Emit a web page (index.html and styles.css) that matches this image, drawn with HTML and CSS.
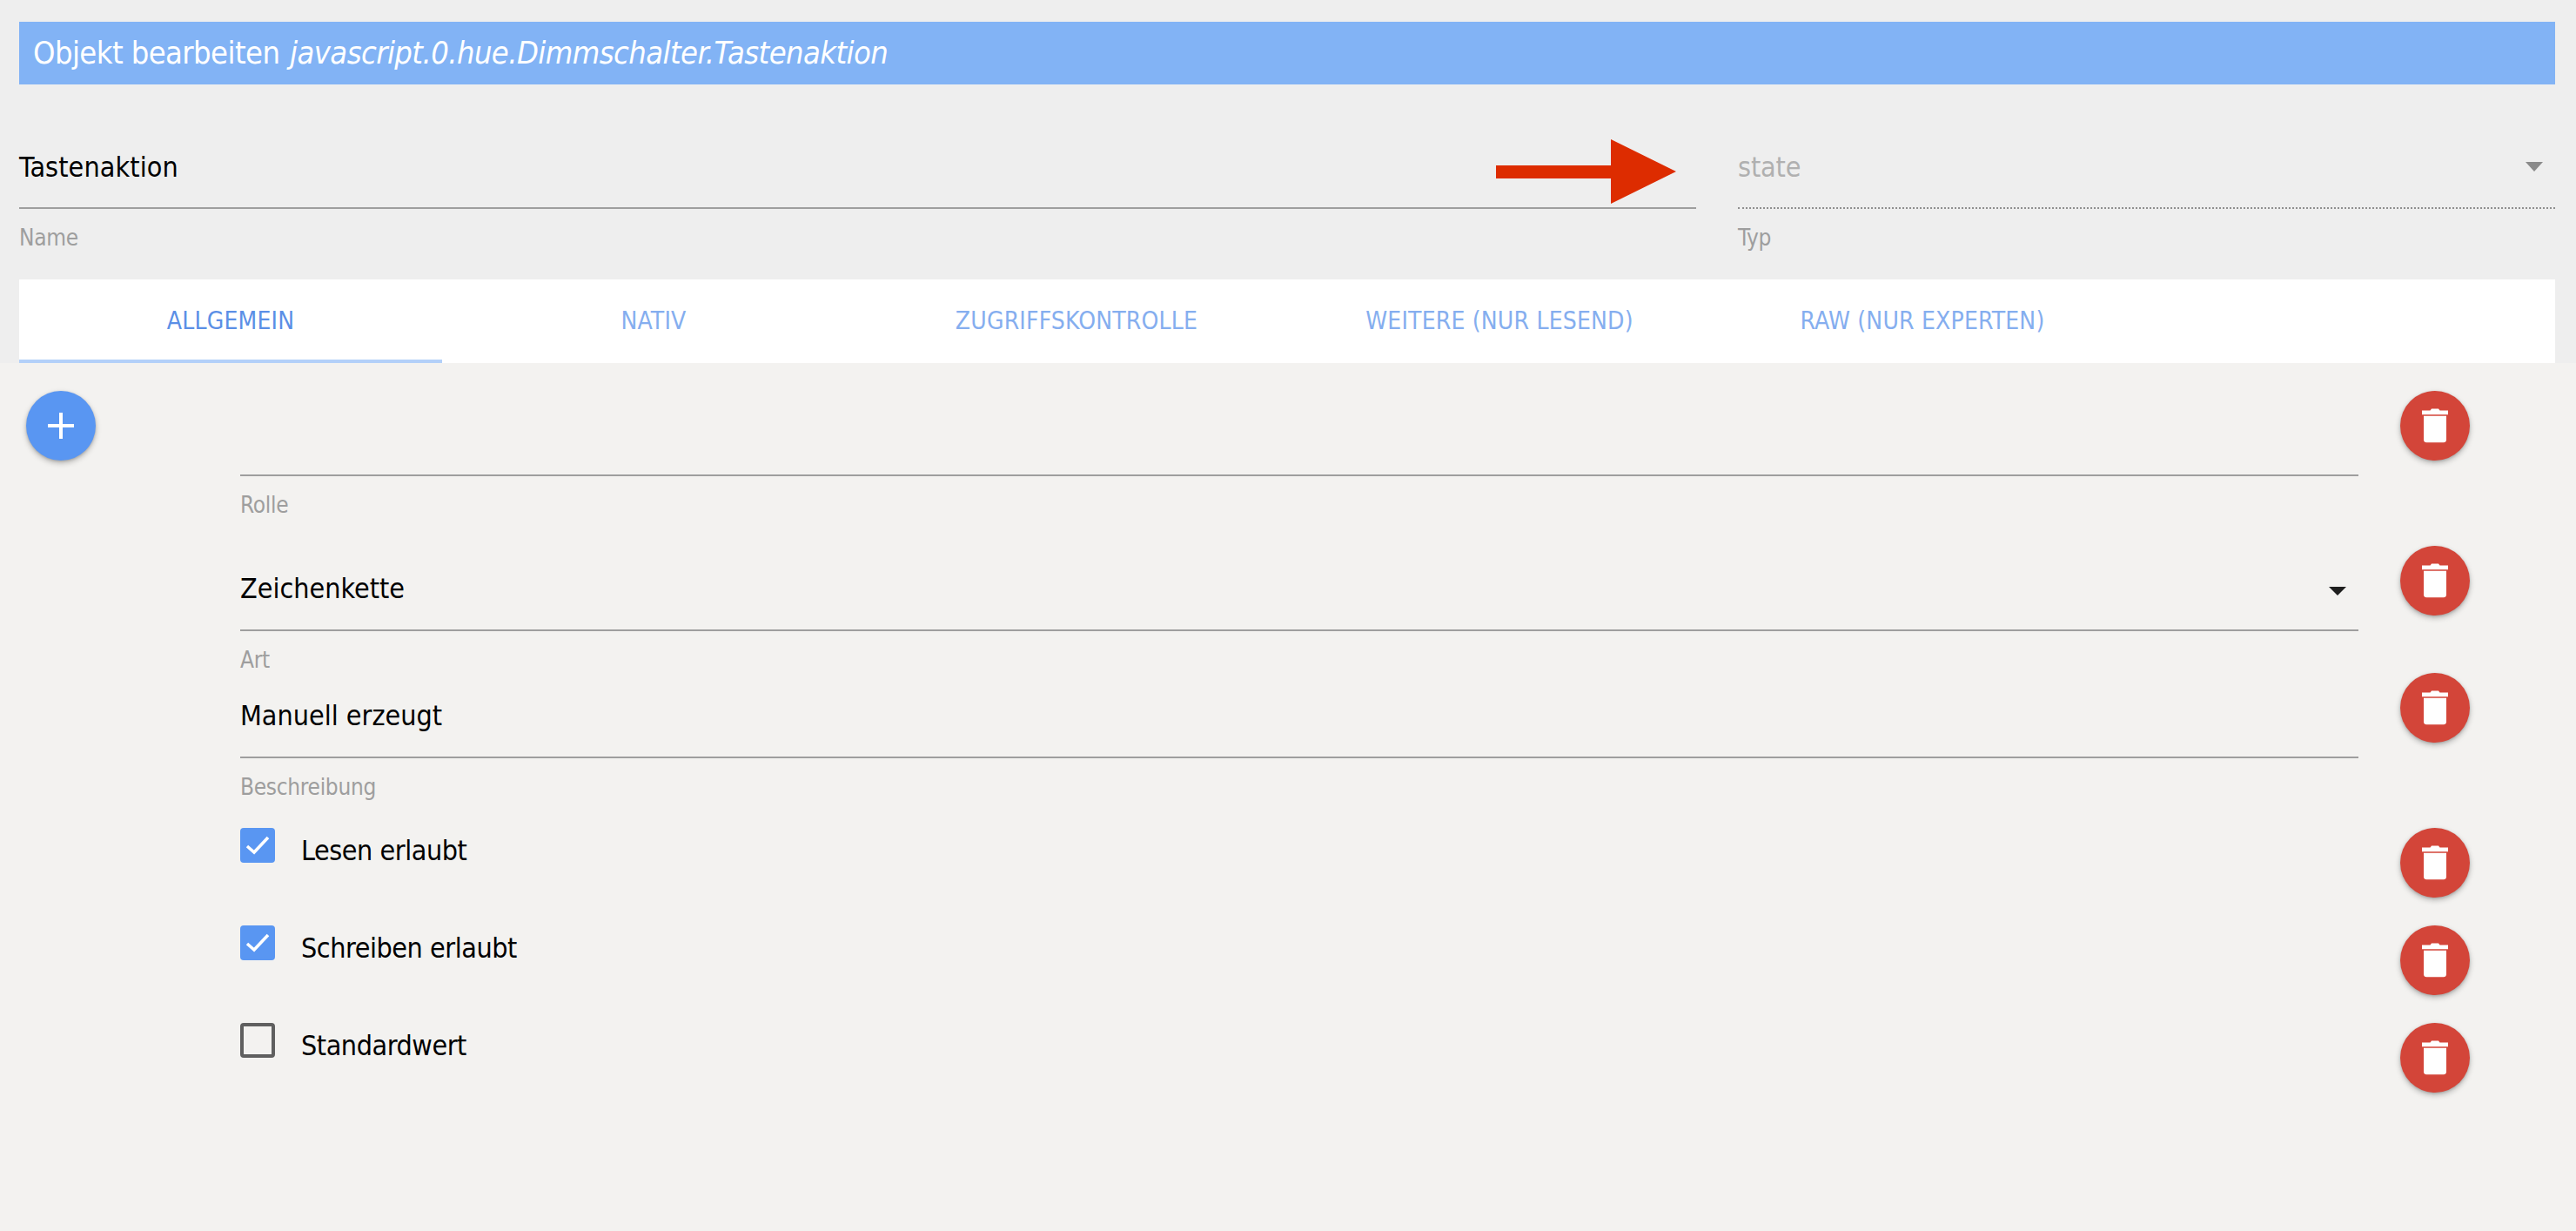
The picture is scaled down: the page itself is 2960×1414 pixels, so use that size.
FILE: index.html
```html
<!DOCTYPE html>
<html lang="de">
<head>
<meta charset="utf-8">
<title>Objekt bearbeiten</title>
<link rel="stylesheet" href="styles.css">
</head>
<body>
<div class="top">
  <h1 class="title">Objekt bearbeiten <i class="title-id">javascript.0.hue.Dimmschalter.Tastenaktion</i></h1>
  <div class="head-fields">
    <div class="head-field">
      <div class="value">Tastenaktion</div>
      <div class="head-label">Name</div>
    </div>
    <div class="head-field disabled">
      <div class="value">state<span class="caret caret-gray"></span></div>
      <div class="head-label">Typ</div>
    </div>
  </div>
  <svg class="arrow" width="207" height="74" viewBox="0 0 207 74"><path d="M0 30H132V0L207 37L132 74V45H0Z" fill="#dd2c00"/></svg>
  <nav class="tabs">
    <div class="tab active">Allgemein</div>
    <div class="tab">Nativ</div>
    <div class="tab">Zugriffskontrolle</div>
    <div class="tab">Weitere (nur lesend)</div>
    <div class="tab">Raw (nur Experten)</div>
  </nav>
</div>
<main class="content">
  <button class="fab fab-add" aria-label="Hinzufügen">
    <svg width="30" height="30" viewBox="0 0 30 30"><path d="M13 0h4v13h13v4H17v13h-4V17H0v-4h13z" fill="#fff"/></svg>
  </button>
  <div class="rows">
    <div class="row row-role">
      <div class="field">
        <div class="input"></div>
        <div class="label">Rolle</div>
      </div>
      <button class="fab fab-del" aria-label="Löschen"><svg class="trash" width="30" height="40" viewBox="0 0 30 40"><path d="M0 2.500h9.500l1.500-2h8l1.500 2H30v4.700H0zM2 8.800h26v27.500a3.200 3.200 0 0 1-3.200 3H5.200a3.200 3.200 0 0 1-3.200-3z" fill="#fff"/></svg></button>
    </div>
    <div class="row row-type">
      <div class="field">
        <div class="input">Zeichenkette<span class="caret caret-dark"></span></div>
        <div class="label">Art</div>
      </div>
      <button class="fab fab-del" aria-label="Löschen"><svg class="trash" width="30" height="40" viewBox="0 0 30 40"><path d="M0 2.500h9.500l1.500-2h8l1.500 2H30v4.700H0zM2 8.800h26v27.500a3.200 3.200 0 0 1-3.200 3H5.200a3.200 3.200 0 0 1-3.200-3z" fill="#fff"/></svg></button>
    </div>
    <div class="row row-desc">
      <div class="field">
        <div class="input">Manuell erzeugt</div>
        <div class="label">Beschreibung</div>
      </div>
      <button class="fab fab-del" aria-label="Löschen"><svg class="trash" width="30" height="40" viewBox="0 0 30 40"><path d="M0 2.500h9.500l1.500-2h8l1.500 2H30v4.700H0zM2 8.800h26v27.500a3.200 3.200 0 0 1-3.200 3H5.200a3.200 3.200 0 0 1-3.200-3z" fill="#fff"/></svg></button>
    </div>
    <div class="row row-check">
      <div class="field check">
        <span class="box on"><svg width="28" height="22" viewBox="0 0 28 22"><path d="M2 12l8 7L26 2" fill="none" stroke="#fff" stroke-width="3.500"/></svg></span>
        <span class="check-label">Lesen erlaubt</span>
      </div>
      <button class="fab fab-del" aria-label="Löschen"><svg class="trash" width="30" height="40" viewBox="0 0 30 40"><path d="M0 2.500h9.500l1.500-2h8l1.500 2H30v4.700H0zM2 8.800h26v27.500a3.200 3.200 0 0 1-3.200 3H5.200a3.200 3.200 0 0 1-3.200-3z" fill="#fff"/></svg></button>
    </div>
    <div class="row row-check">
      <div class="field check">
        <span class="box on"><svg width="28" height="22" viewBox="0 0 28 22"><path d="M2 12l8 7L26 2" fill="none" stroke="#fff" stroke-width="3.500"/></svg></span>
        <span class="check-label">Schreiben erlaubt</span>
      </div>
      <button class="fab fab-del" aria-label="Löschen"><svg class="trash" width="30" height="40" viewBox="0 0 30 40"><path d="M0 2.500h9.500l1.500-2h8l1.500 2H30v4.700H0zM2 8.800h26v27.500a3.200 3.200 0 0 1-3.200 3H5.200a3.200 3.200 0 0 1-3.200-3z" fill="#fff"/></svg></button>
    </div>
    <div class="row row-check">
      <div class="field check">
        <span class="box"></span>
        <span class="check-label">Standardwert</span>
      </div>
      <button class="fab fab-del" aria-label="Löschen"><svg class="trash" width="30" height="40" viewBox="0 0 30 40"><path d="M0 2.500h9.500l1.500-2h8l1.500 2H30v4.700H0zM2 8.800h26v27.500a3.200 3.200 0 0 1-3.200 3H5.200a3.200 3.200 0 0 1-3.200-3z" fill="#fff"/></svg></button>
    </div>
  </div>
</main>
</body>
</html>
```
FILE: styles.css
```css
* { box-sizing: border-box; }
html, body { margin: 0; height: 100%; }
body {
  background: #f3f2f0;
  font-family: "DejaVu Sans Condensed", "DejaVu Sans", sans-serif;
  font-stretch: condensed;
  color: #000;
  overflow: hidden;
}
.top {
  position: relative;
  background: #eeeeee;
  height: 417px;
  padding: 25px 24px 0 22px;
}
.title {
  margin: 0;
  height: 72px;
  padding-left: 16px;
  background: #82b3f5;
  color: #fff;
  font-size: 36px;
  font-weight: 400;
  line-height: 72px;
  letter-spacing: -.57px;
  white-space: pre-wrap;
}
.title-id { margin-left: 2px; }
.head-fields {
  display: flex;
  gap: 48px;
  margin-top: 46px;
  height: 178px;
}
.head-field { flex: 0 0 1927px; }
.head-field.disabled { flex: 0 0 939px; }
.head-field .value {
  position: relative;
  height: 97px;
  padding-top: 25px;
  border-bottom: 2px solid #9e9e9e;
  font-size: 32px;
  line-height: 48px;
  letter-spacing: .1px;
}
.head-field.disabled .value {
  color: #b0b0b0;
  border-bottom: 2px dotted #8f8f8f;
  letter-spacing: -.1px;
}
.head-label {
  margin-top: 15px;
  font-size: 26px;
  line-height: 36px;
  letter-spacing: -.3px;
  color: #9e9e9e;
}
.arrow { position: absolute; left: 1719px; top: 160px; }
.caret {
  position: absolute;
  width: 0;
  height: 0;
  border-left: 10px solid transparent;
  border-right: 10px solid transparent;
}
.caret-gray { right: 14px; top: 43px; border-top: 11px solid #8a8a8a; }
.caret-dark { right: 14px; top: 47px; border-top: 10px solid #1e1e1e; }
.tabs {
  display: flex;
  height: 96px;
  background: #fff;
}
.tab {
  flex: 0 0 486px;
  text-align: center;
  font-size: 28px;
  line-height: 96px;
  letter-spacing: .2px;
  text-transform: uppercase;
  color: #85aeef;
}
.tab.active {
  color: #5b8fe6;
  border-bottom: 4px solid #b3d0f9;
}
.content {
  display: flex;
  align-items: flex-start;
  padding: 32px 0 0 30px;
}
.fab {
  display: flex;
  align-items: center;
  justify-content: center;
  flex: none;
  width: 80px;
  height: 80px;
  padding: 0;
  border: 0;
  border-radius: 50%;
  box-shadow: 0 3px 6px rgba(0,0,0,.25), 0 1px 3px rgba(0,0,0,.15);
}
.fab-add { background: #5996f2; }
.fab-del { background: #d34539; }
.rows { margin-left: 166px; width: 2562px; }
.row { display: flex; gap: 48px; align-items: flex-start; }
.row-role { height: 178px; }
.row-type { height: 146px; }
.row-desc { height: 178px; }
.row-check { height: 112px; }
.field { flex: 0 0 2434px; }
.input {
  position: relative;
  border-bottom: 2px solid #9e9e9e;
  font-size: 32px;
  line-height: 48px;
}
.row-role .input { height: 98px; }
.row-type .input { height: 98px; padding-top: 25px; }
.row-desc .input { height: 98px; padding-top: 25px; }
.label {
  margin-top: 15px;
  font-size: 26px;
  line-height: 36px;
  letter-spacing: -.3px;
  color: #9e9e9e;
}
.check { display: flex; align-items: flex-start; gap: 30px; }
.box {
  display: flex;
  align-items: center;
  justify-content: center;
  width: 40px;
  height: 40px;
  border: 4px solid #5f5f5f;
  border-radius: 4px;
}
.box.on { background: #5996f2; border: 0; }
.check-label { font-size: 32px; line-height: 48px; margin-top: 2px; letter-spacing: -.45px; }
```
